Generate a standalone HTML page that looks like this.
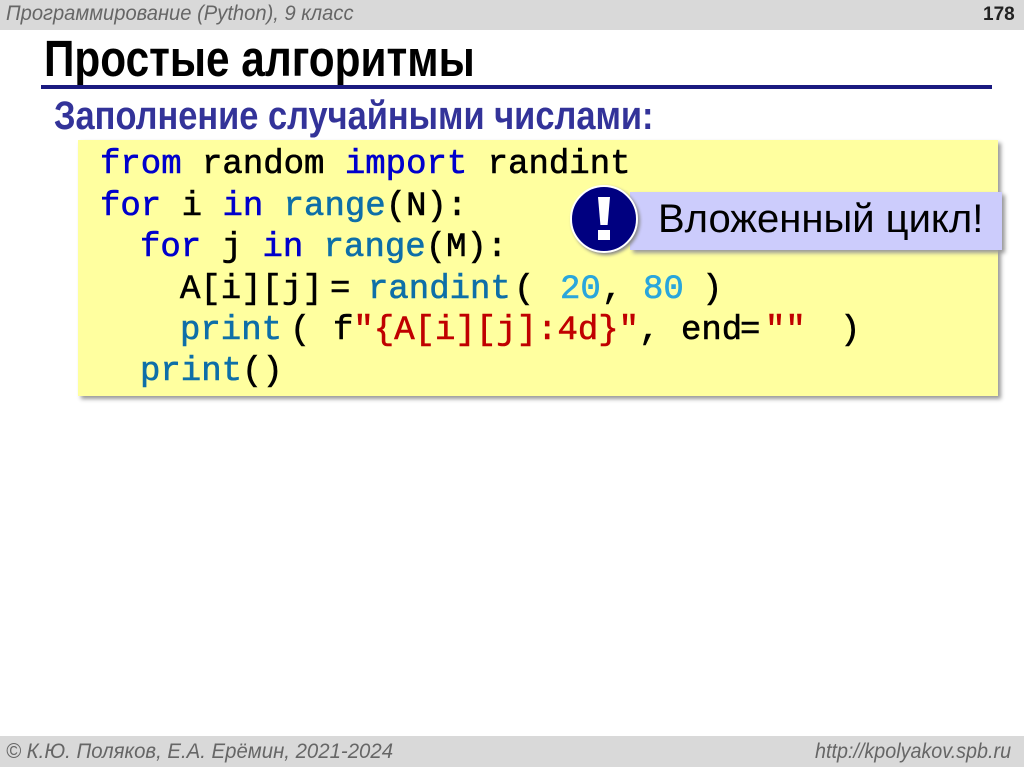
<!DOCTYPE html>
<html><head><meta charset="utf-8"><style>
body{margin:0;width:1024px;height:767px;position:relative;background:#fff;overflow:hidden;font-family:"Liberation Sans",sans-serif}
.bar{position:absolute;left:0;width:1024px;background:#d9d9d9;color:#666;font-style:italic}
.a{position:absolute;white-space:pre}
.code .a{font-family:"Liberation Mono",monospace;font-size:34px;line-height:40px;-webkit-text-stroke:0.6px currentColor}
.k{color:#0000cc}.b{color:#0e6fa8}.n{color:#2aa6dc}.s{color:#c00000}.t{color:#000}
</style></head><body>
<div class="bar" style="top:0;height:30px"></div>
<div class="a" style="left:6px;top:2px;font-size:21px;color:#666;font-style:italic;transform:scaleX(.96);transform-origin:left">Программирование (Python), 9 класс</div>
<div class="a" style="left:983px;top:4px;font-size:19px;font-weight:bold;color:#222">178</div>
<div class="a" style="left:44px;top:29px;font-size:51px;font-weight:bold;color:#000;transform:scaleX(.83);transform-origin:left">Простые алгоритмы</div>
<div style="position:absolute;left:41px;top:85px;width:951px;height:4px;background:#1a1a80"></div>
<div class="a" style="left:54px;top:94px;font-size:40px;font-weight:bold;color:#333399;transform:scaleX(.86);transform-origin:left">Заполнение случайными числами:</div>
<div style="position:absolute;left:78px;top:140px;width:920px;height:256px;background:#ffff9f;box-shadow:3px 3px 4px #999"></div>
<div class="code">
<div class="a" style="left:100px;top:145px"><span class="k">from</span><span class="t"> random </span><span class="k">import</span><span class="t"> randint</span></div>
<div class="a" style="left:100px;top:187px"><span class="k">for</span><span class="t"> i </span><span class="k">in</span> <span class="b">range</span><span class="t">(N):</span></div>
<div class="a" style="left:140px;top:228px"><span class="k">for</span><span class="t"> j </span><span class="k">in</span> <span class="b">range</span><span class="t">(M):</span></div>
<div class="a t" style="left:180px;top:270px">A[i][j]</div>
<div class="a t" style="left:330px;top:270px">=</div>
<div class="a b" style="left:368px;top:270px">randint</div>
<div class="a t" style="left:514px;top:270px">(</div>
<div class="a n" style="left:560px;top:270px">20</div>
<div class="a t" style="left:602px;top:270px">,</div>
<div class="a n" style="left:643px;top:270px">80</div>
<div class="a t" style="left:702px;top:270px">)</div>
<div class="a b" style="left:180px;top:311px">print</div>
<div class="a t" style="left:290px;top:311px">(</div>
<div class="a" style="left:333px;top:311px"><span class="t">f</span><span class="s">"{A[i][j]:4d}"</span><span class="t">,</span></div>
<div class="a t" style="left:681px;top:311px">end</div>
<div class="a t" style="left:740px;top:311px">=</div>
<div class="a s" style="left:765px;top:311px">""</div>
<div class="a t" style="left:840px;top:311px">)</div>
<div class="a" style="left:140px;top:352px"><span class="b">print</span><span class="t">()</span></div>
</div>
<div style="position:absolute;left:630px;top:192px;width:372px;height:58px;background:#ccccfc;box-shadow:3px 3px 4px #999"></div>
<div class="a" style="left:658px;top:197px;font-size:40px;color:#000">Вложенный цикл!</div>
<div style="position:absolute;left:570px;top:185px;width:68px;height:68px;border-radius:50%;background:#000080;border:2px solid #fff;box-sizing:border-box;box-shadow:2px 2px 3px #888"></div>
<div style="position:absolute;left:598px;top:197px;width:12px;height:28px;background:#fff;clip-path:polygon(0 0,100% 0,80% 100%,20% 100%)"></div>
<div style="position:absolute;left:598px;top:230px;width:12px;height:10px;background:#fff"></div>
<div class="bar" style="top:736px;height:31px"></div>
<div class="a" style="left:6px;top:740px;font-size:21px;color:#666;font-style:italic;transform:scaleX(.97);transform-origin:left">© К.Ю. Поляков, Е.А. Ерёмин, 2021-2024</div>
<div class="a" style="left:815px;top:740px;font-size:21px;color:#666;font-style:italic;transform:scaleX(.94);transform-origin:left">http://kpolyakov.spb.ru</div>
</body></html>
